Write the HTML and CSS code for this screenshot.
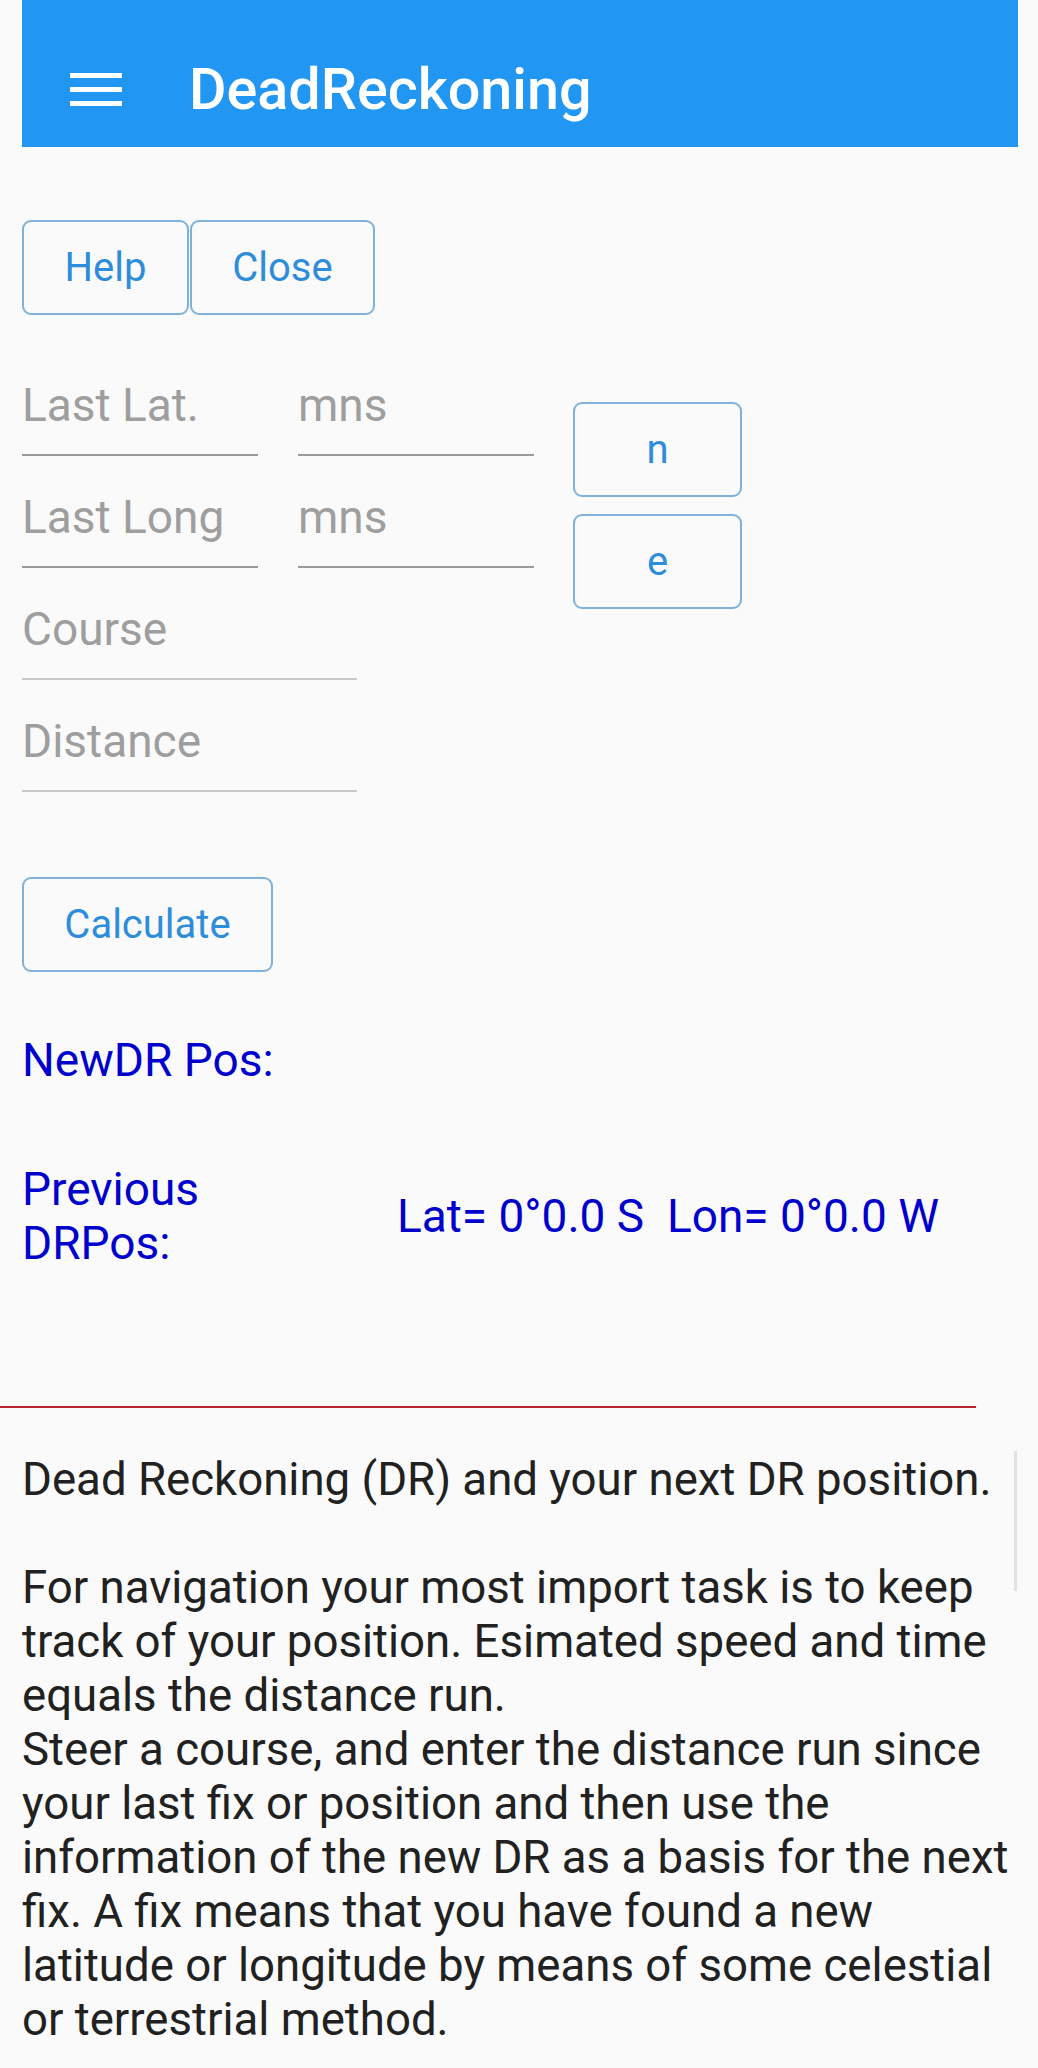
FILE: index.html
```html
<!DOCTYPE html>
<html lang="en">
  <head>
    <meta charset="UTF-8" />
    <meta name="viewport" content="width=device-width, initial-scale=1.0" />
    <title>DeadReckoning</title>
    <link rel="stylesheet" href="styles.css">
  </head>

  <body>
    <div class="toolbar">
      <div class="menu-icon">
        <span></span>
        <span></span>
        <span></span>
      </div>
      <h1>DeadReckoning</h1>
    </div>

    <div class="page">
      <div class="top-buttons">
        <button class="btn btn-help">Help</button>
        <button class="btn btn-close">Close</button>
      </div>

      <div class="form-area">
        <div class="fields">
          <div class="field-row">
            <input type="text" class="field dark" placeholder="Last Lat." />
            <input type="text" class="field dark" placeholder="mns" />
          </div>
          <div class="field-row">
            <input type="text" class="field dark" placeholder="Last Long" />
            <input type="text" class="field dark" placeholder="mns" />
          </div>
          <input type="text" class="field wide" placeholder="Course" />
          <input type="text" class="field wide" placeholder="Distance" />
        </div>

        <div class="hemi-buttons">
          <button class="btn btn-hemi">n</button>
          <button class="btn btn-hemi">e</button>
        </div>
      </div>

      <button class="btn btn-calc">Calculate</button>

      <div class="result new-pos">NewDR Pos:</div>

      <div class="prev-row">
        <div class="result prev-label">Previous DRPos:</div>
        <div class="result prev-value">Lat= 0°0.0 S  Lon= 0°0.0 W</div>
      </div>
    </div>

    <hr class="divider" />

    <div class="help-text">
      Dead Reckoning (DR) and your next DR position.<br /><br />
      For navigation your most import task is to keep track of your position. Esimated speed and time equals the distance run.<br />
      Steer a course, and enter the distance run since your last fix or position and then use the information of the new DR as a basis for the next fix. A fix means that you have found a new latitude or longitude by means of some celestial or terrestrial method.
    </div>
  </body>
</html>
```

FILE: styles.css
```css
body {
  font-family: Roboto, "Noto Sans", sans-serif;
  background-color: #fafafa;
  margin: 0;
  padding: 0;
}

.toolbar {
  display: flex;
  align-items: center;
  height: 147px;
  box-sizing: border-box;
  padding-top: 32px;
  margin: 0 20px 0 22px;
  background-color: #2196f3;
}

.menu-icon {
  display: flex;
  flex-direction: column;
  gap: 9px;
  margin-left: 48px;
  width: 52px;
}

.menu-icon span {
  display: block;
  height: 5px;
  background-color: #fff;
}

.toolbar h1 {
  margin: 0 0 0 67px;
  color: #fff;
  font-size: 57.5px;
  font-weight: 500;
}

.page {
  padding-left: 22px;
}

.btn {
  font-family: Roboto, "Noto Sans", sans-serif;
  font-size: 40px;
  color: #2e8ddb;
  background-color: #fafafa;
  border: 2px solid #7eb2da;
  border-radius: 9px;
  height: 95px;
  padding: 0 40px;
  box-sizing: border-box;
  cursor: pointer;
}

.top-buttons {
  display: flex;
  gap: 1px;
  margin-top: 73px;
}

.btn-help {
  width: 167px;
}

.btn-close {
  width: 185px;
}

.form-area {
  display: flex;
  align-items: flex-start;
  margin-top: 29px;
}

.fields {
  display: flex;
  flex-direction: column;
  width: 513px;
}

.field-row {
  display: flex;
  gap: 40px;
}

.field {
  font-family: Roboto, "Noto Sans", sans-serif;
  font-size: 46px;
  height: 112px;
  box-sizing: border-box;
  padding: 11px 0 0 0;
  border: none;
  border-bottom: 2px solid #c8c8c8;
  background: transparent;
  outline: none;
}

.field::placeholder {
  color: #9e9e9e;
}

.field.dark {
  width: 236px;
  border-bottom-color: #9a9a9a;
}

.field.wide {
  width: 335px;
}

.hemi-buttons {
  display: flex;
  flex-direction: column;
  gap: 17px;
  margin: 58px 0 0 38px;
}

.btn-hemi {
  width: 169px;
  height: 95px;
  padding: 0;
}

.btn-calc {
  width: 251px;
  margin-top: 85px;
  padding: 0;
}

.result {
  color: #0000cd;
  font-size: 46px;
  line-height: 54px;
}

.new-pos {
  margin-top: 61px;
}

.prev-row {
  display: flex;
  align-items: center;
  margin-top: 75px;
}

.prev-label {
  width: 300px;
}

.prev-value {
  margin-left: 75px;
  white-space: pre;
}

.divider {
  width: 976px;
  margin: 136px 0 0 0;
  border: none;
  border-top: 2px solid #b8262e;
}

.help-text {
  position: relative;
  margin-top: 45px;
  padding: 0 20px 0 22px;
  color: #212121;
  font-size: 45.6px;
  line-height: 54px;
}

.help-text::after {
  content: "";
  position: absolute;
  top: -2px;
  right: 21px;
  width: 3px;
  height: 140px;
  background-color: #e2e2e2;
}
```
